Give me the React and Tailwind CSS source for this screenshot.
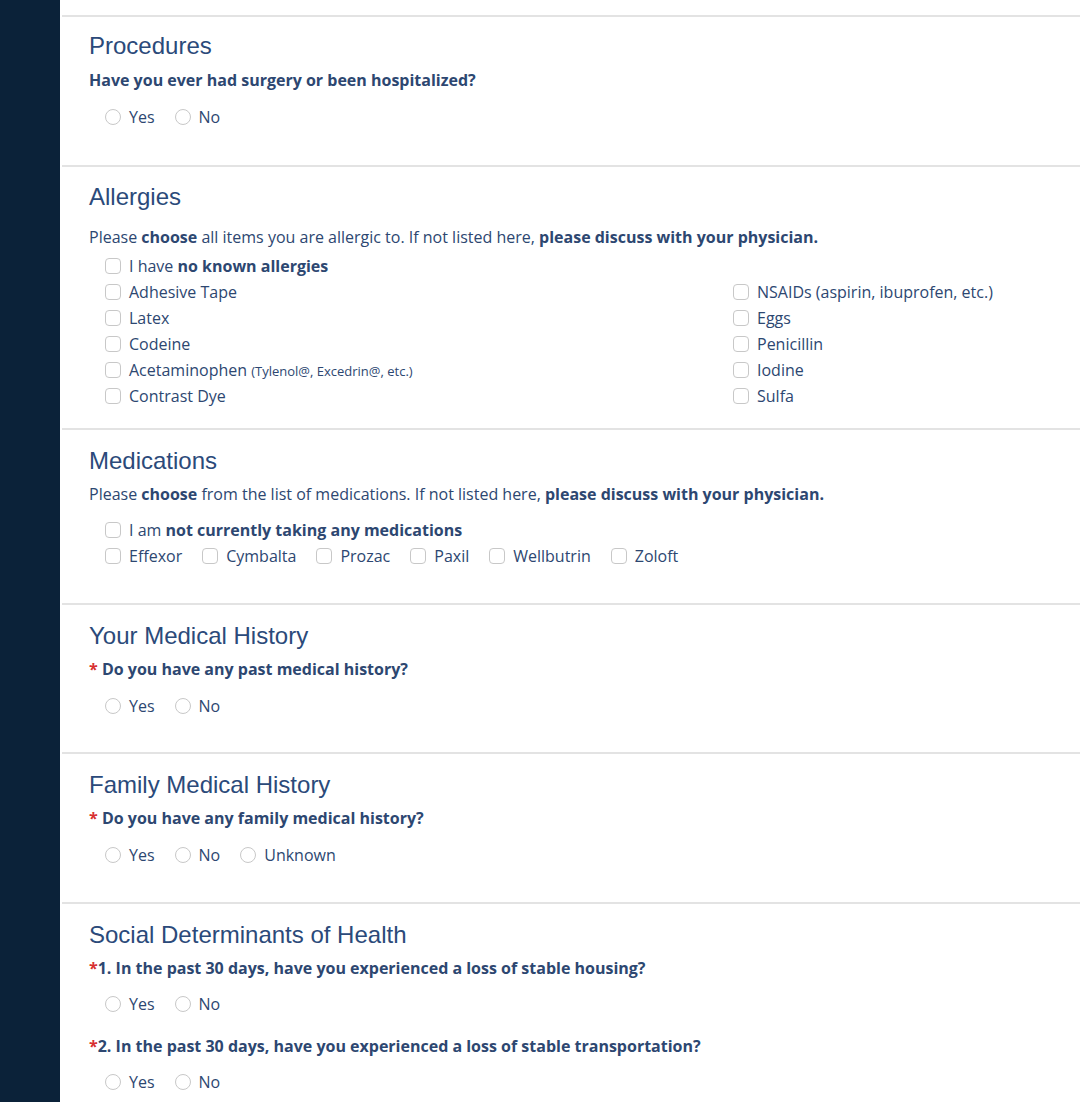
import React from "react";

const body = { fontFamily: '"Open Sans", "Liberation Sans", sans-serif' };
const head = { fontFamily: '"Liberation Sans", Arial, sans-serif' };

function Radio({ label }) {
  return (
    <label className="flex items-center gap-[8px]">
      <span className="inline-block w-[16px] h-[16px] rounded-full border border-[#c8c8c8] bg-white"></span>
      <span>{label}</span>
    </label>
  );
}

function Check({ children }) {
  return (
    <label className="flex items-center gap-[8px] h-[26px]">
      <span className="inline-block w-[16px] h-[16px] rounded-[4px] border border-[#c8c8c8] bg-white shrink-0"></span>
      <span>{children}</span>
    </label>
  );
}

function Radios({ items, className = "" }) {
  return (
    <div className={"flex items-center gap-[20px] pl-[16px] h-[24px] " + className}>
      {items.map((i) => (
        <Radio key={i} label={i} />
      ))}
    </div>
  );
}

function Heading({ children }) {
  return (
    <h2 style={head} className="text-[24px] leading-[30px] text-[#2b4a7a] font-normal">
      {children}
    </h2>
  );
}

function Star() {
  return <span className="text-[#d8302f]">*</span>;
}

export default function App() {
  return (
    <div style={body} className="flex min-h-[1102px] w-[1080px] bg-white text-[16px] text-[#2d4771]">
      <div className="w-[60px] shrink-0 bg-[#0b2239]"></div>
      <div className="flex-1 pl-[2px]">
        <div className="h-[15px]"></div>

        {/* Procedures */}
        <section className="border-t-2 border-[#e3e3e3] pl-[27px] pt-[14px] pb-[36px]">
          <Heading>Procedures</Heading>
          <p className="font-bold leading-[24px] mt-[7px]">Have you ever had surgery or been hospitalized?</p>
          <Radios items={["Yes", "No"]} className="mt-[13px]" />
        </section>

        {/* Allergies */}
        <section className="border-t-2 border-[#e3e3e3] pl-[27px] pt-[15px] pb-[19px]">
          <Heading>Allergies</Heading>
          <p className="leading-[24px] mt-[13px]">
            Please <b>choose</b> all items you are allergic to. If not listed here, <b>please discuss with your physician.</b>
          </p>
          <div className="pl-[16px] mt-[4px]">
            <Check>
              I have <b>no known allergies</b>
            </Check>
            <div className="flex">
              <div className="w-[628px] shrink-0">
                <Check>Adhesive Tape</Check>
                <Check>Latex</Check>
                <Check>Codeine</Check>
                <Check>
                  Acetaminophen <span className="text-[13px]">(Tylenol@, Excedrin@, etc.)</span>
                </Check>
                <Check>Contrast Dye</Check>
              </div>
              <div>
                <Check>NSAIDs (aspirin, ibuprofen, etc.)</Check>
                <Check>Eggs</Check>
                <Check>Penicillin</Check>
                <Check>Iodine</Check>
                <Check>Sulfa</Check>
              </div>
            </div>
          </div>
        </section>

        {/* Medications */}
        <section className="border-t-2 border-[#e3e3e3] pl-[27px] pt-[16px] pb-[34px]">
          <Heading>Medications</Heading>
          <p className="leading-[24px] mt-[6px]">
            Please <b>choose</b> from the list of medications. If not listed here, <b>please discuss with your physician.</b>
          </p>
          <div className="pl-[16px] mt-[11px]">
            <Check>
              I am <b>not currently taking any medications</b>
            </Check>
            <div className="flex gap-[20px]">
              {["Effexor", "Cymbalta", "Prozac", "Paxil", "Wellbutrin", "Zoloft"].map((m) => (
                <Check key={m}>{m}</Check>
              ))}
            </div>
          </div>
        </section>

        {/* Your Medical History */}
        <section className="border-t-2 border-[#e3e3e3] pl-[27px] pt-[16px] pb-[34px]">
          <Heading>Your Medical History</Heading>
          <p className="font-bold leading-[24px] mt-[6px]">
            <Star /> Do you have any past medical history?
          </p>
          <Radios items={["Yes", "No"]} className="mt-[13px]" />
        </section>

        {/* Family Medical History */}
        <section className="border-t-2 border-[#e3e3e3] pl-[27px] pt-[16px] pb-[35px]">
          <Heading>Family Medical History</Heading>
          <p className="font-bold leading-[24px] mt-[6px]">
            <Star /> Do you have any family medical history?
          </p>
          <Radios items={["Yes", "No", "Unknown"]} className="mt-[13px]" />
        </section>

        {/* Social Determinants */}
        <section className="border-t-2 border-[#e3e3e3] pl-[27px] pt-[16px] pb-[20px]">
          <Heading>Social Determinants of Health</Heading>
          <p className="font-bold leading-[24px] mt-[6px]">
            <Star />1. In the past 30 days, have you experienced a loss of stable housing?
          </p>
          <Radios items={["Yes", "No"]} className="mt-[12px]" />
          <p className="font-bold leading-[24px] mt-[18px]">
            <Star />2. In the past 30 days, have you experienced a loss of stable transportation?
          </p>
          <Radios items={["Yes", "No"]} className="mt-[12px]" />
        </section>
      </div>
    </div>
  );
}
